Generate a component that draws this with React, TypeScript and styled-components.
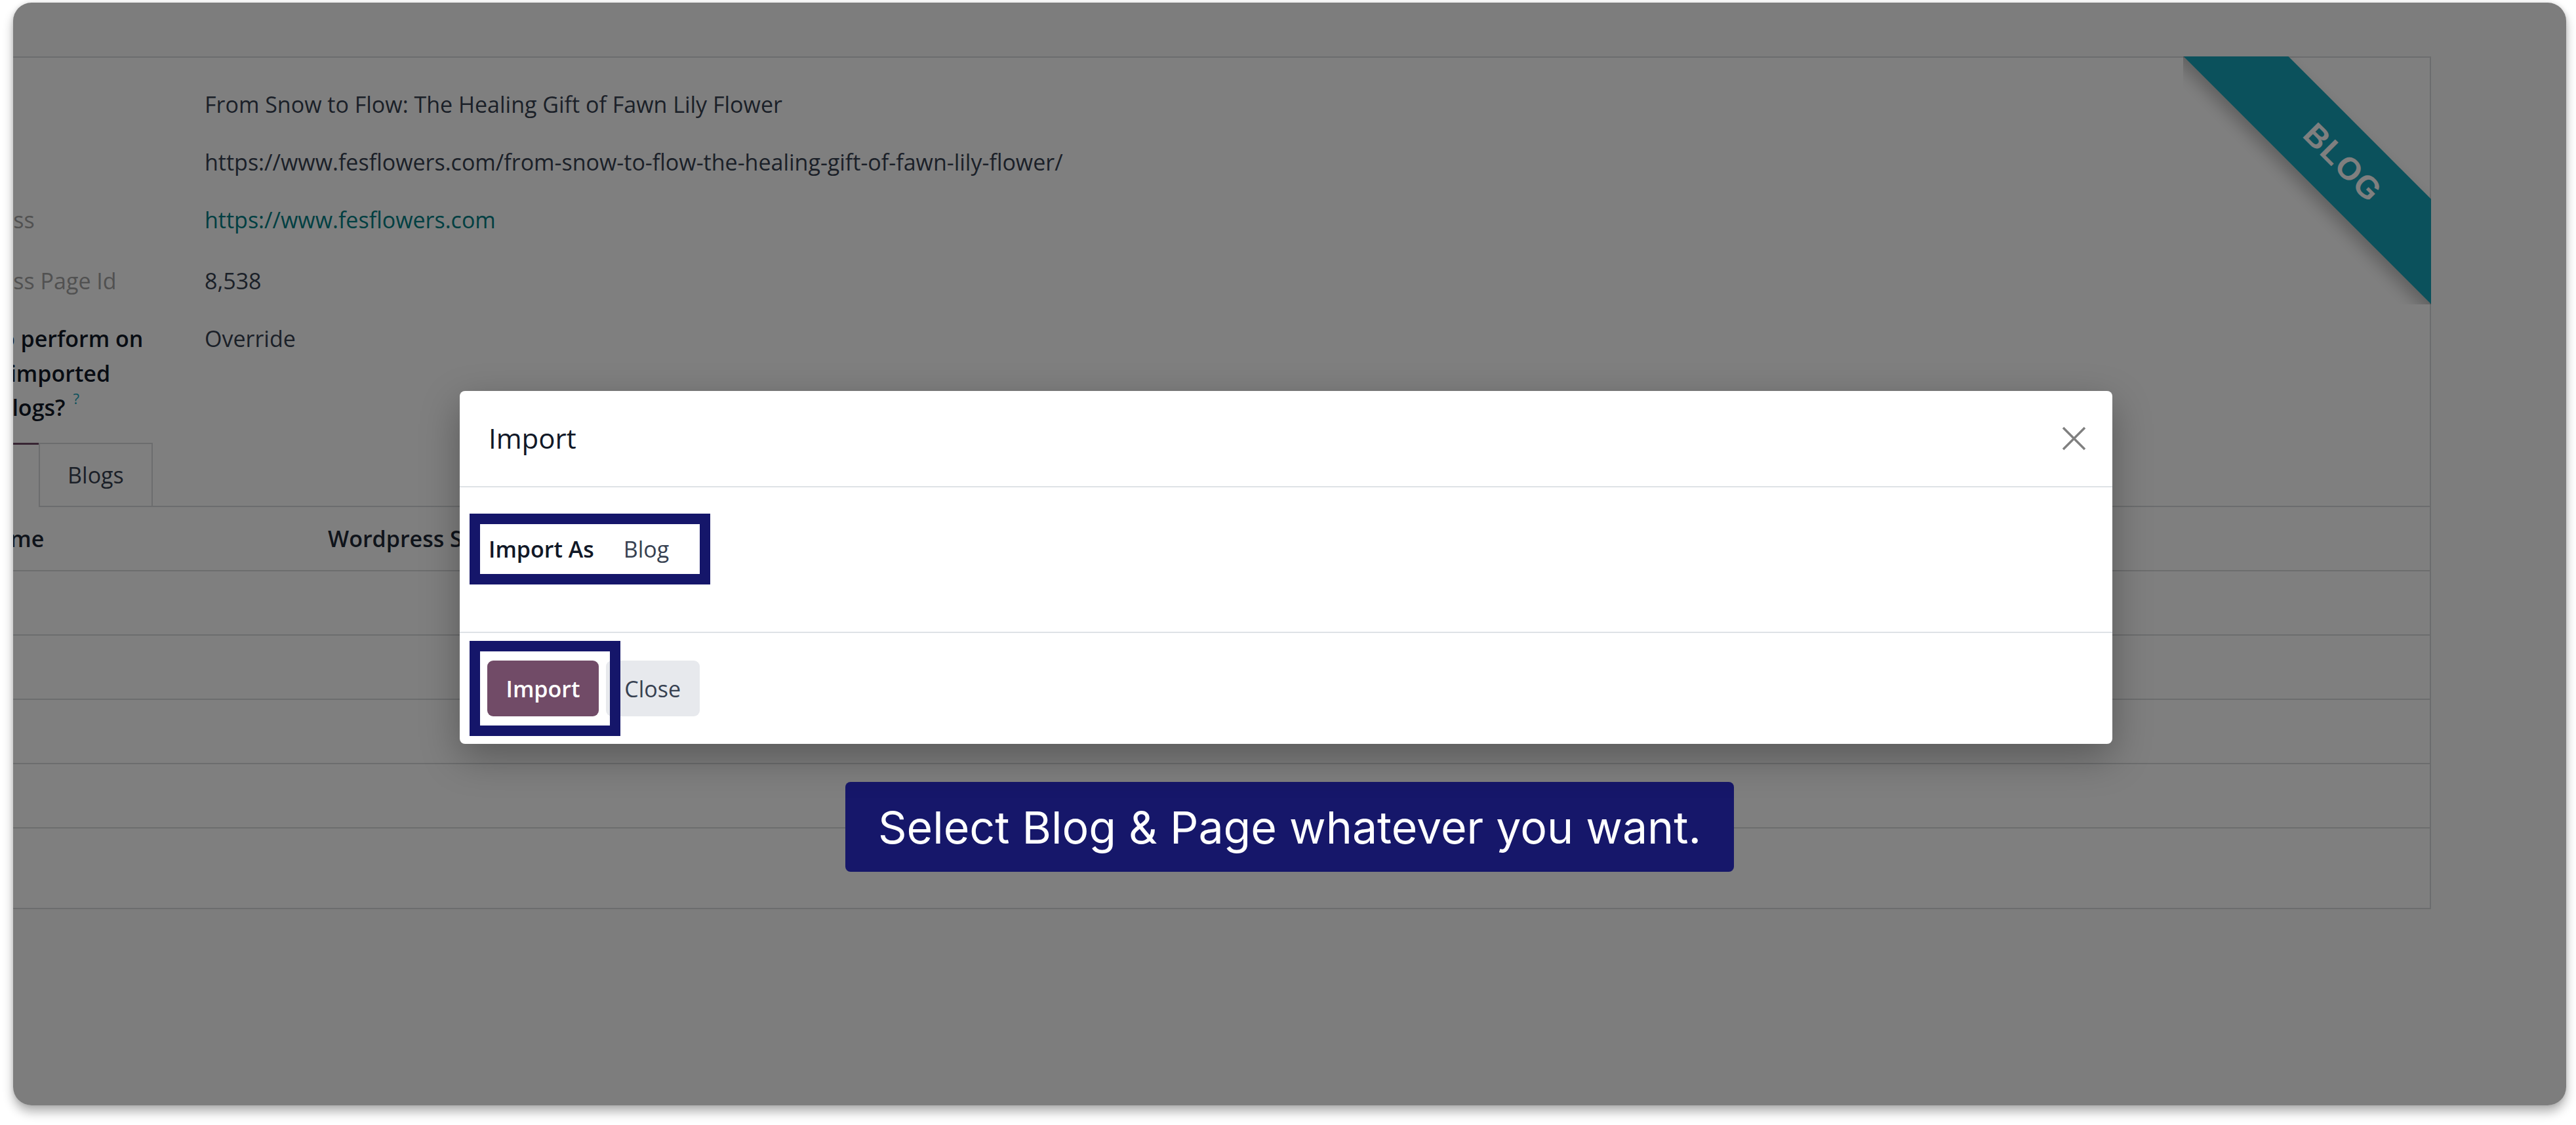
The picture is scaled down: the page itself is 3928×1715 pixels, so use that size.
import React from "react";
import styled, { createGlobalStyle } from "styled-components";

const GlobalStyle = createGlobalStyle`
  html, body { margin: 0; padding: 0; background: #ffffff; }
  body { font-family: "Open Sans", "Noto Sans", sans-serif; }
  * { box-sizing: border-box; }
`;

const Page = styled.div`
  width: 3928px;
  height: 1715px;
  padding: 4px 15px 0 20px;
  background: #ffffff;
  overflow: hidden;
`;

const Frame = styled.div`
  position: relative;
  width: 3893px;
  height: 1681px;
  border-radius: 28px;
  overflow: hidden;
  background: #fbfbfb;
  box-shadow: 0 10px 16px rgba(0, 0, 0, 0.3), 0 0 6px rgba(0, 0, 0, 0.12);
`;

const Screen = styled.div`
  padding: 82px 206px 0 0;
  font-family: "Open Sans", "Noto Sans", sans-serif;
  font-size: 34px;
  line-height: 52.5px;
  color: #374151;
`;

const Sheet = styled.div`
  position: relative;
  margin-left: -300px;
  background: #ffffff;
  border: 2px solid #d8dadd;
  padding: 45px 0 121px 158px;
`;

const RibbonClip = styled.div`
  position: absolute;
  top: -2px;
  right: -2px;
  width: 378px;
  height: 378px;
  overflow: hidden;
`;

const RibbonBand = styled.div`
  position: absolute;
  left: -77px;
  top: 106px;
  width: 640px;
  height: 113px;
  transform: rotate(45deg);
  background: #17a2b8;
  color: #ffffff;
  display: flex;
  align-items: center;
  justify-content: center;
  font-family: "Liberation Sans", Arial, sans-serif;
  font-weight: 700;
  font-size: 48px;
  letter-spacing: 2px;
  text-transform: uppercase;
  box-shadow: 0 12px 24px rgba(0, 0, 0, 0.25);
`;

const FieldGroup = styled.div`
  display: flex;
  flex-direction: column;
  gap: 35.5px;
`;

const FieldRow = styled.div<{ $h?: number }>`
  display: grid;
  grid-template-columns: 432px 1fr;
  min-height: ${(p) => p.$h ?? 52.5}px;
`;

const Label = styled.div<{ $strong?: boolean }>`
  white-space: nowrap;
  color: ${(p) => (p.$strong ? "#111827" : "#a3a3a3")};
  font-weight: ${(p) => (p.$strong ? 600 : 400)};
`;

const LabelLine = styled.span<{ $shift?: number }>`
  display: block;
  margin-left: ${(p) => p.$shift ?? 0}px;
`;

const Help = styled.sup`
  color: #17a2b8;
  font-size: 22px;
  font-weight: 400;
  margin-left: 12px;
  vertical-align: 18px;
  line-height: 0;
`;

const Value = styled.div<{ $link?: boolean }>`
  white-space: nowrap;
  color: ${(p) => (p.$link ? "#017e84" : "#374151")};
`;

const TabBar = styled.div`
  display: flex;
  margin-top: 27.5px;
  height: 98px;
`;

const Tab = styled.div<{ $active?: boolean }>`
  display: flex;
  align-items: center;
  padding: 0 42px;
  height: 98px;
  border: 2px solid #d8dadd;
  border-bottom-color: ${(p) => (p.$active ? "transparent" : "#d8dadd")};
  border-top: ${(p) => (p.$active ? "3px solid #714b67" : "2px solid #d8dadd")};
  border-left-color: ${(p) => (p.$active ? "transparent" : "#d8dadd")};
  border-right-width: ${(p) => (p.$active ? "0" : "2px")};
  color: ${(p) => (p.$active ? "#1f2937" : "#374151")};
`;

const TabFill = styled.div`
  flex: 1;
  border-bottom: 2px solid #d8dadd;
`;

const ListRow = styled.div<{ $head?: boolean }>`
  display: grid;
  grid-template-columns: 80px 531px 760px 1fr;
  height: 98px;
  border-bottom: 2px solid #d8dadd;
  align-items: center;
  font-weight: ${(p) => (p.$head ? 600 : 400)};
  color: #1f2937;
`;

const Cell = styled.div`
  padding: 0 9px;
  white-space: nowrap;
  overflow: hidden;
`;

const Backdrop = styled.div`
  position: absolute;
  inset: 0;
  background: rgba(0, 0, 0, 0.5);
`;

const Overlay = styled.div`
  position: absolute;
  inset: 0;
  display: flex;
  flex-direction: column;
  padding-top: 592px;
`;

const Modal = styled.div`
  position: relative;
  width: 2520px;
  margin-left: 681px;
  background: #ffffff;
  border-radius: 8px;
  box-shadow: 0 20px 60px rgba(0, 0, 0, 0.3);
  font-family: "Open Sans", "Noto Sans", sans-serif;
  font-size: 34px;
  line-height: 52.5px;
  color: #374151;
`;

const ModalHeader = styled.div`
  height: 147px;
  display: flex;
  align-items: center;
  justify-content: space-between;
  padding: 0 40px 0 44px;
  border-bottom: 2px solid #dee2e6;
`;

const ModalTitle = styled.div`
  font-size: 42px;
  color: #111827;
`;

const CloseX = styled.button`
  width: 37px;
  height: 37px;
  padding: 0;
  border: 0;
  background: transparent;
  display: flex;
`;

const ModalBody = styled.div`
  height: 220px;
  padding: 68px 44px 0;
`;

const InlineField = styled.div`
  display: flex;
  gap: 45px;
  align-items: baseline;
`;

const InlineLabel = styled.span`
  font-weight: 600;
  color: #111827;
`;

const InlineValue = styled.span`
  color: #374151;
`;

const ModalFooter = styled.div`
  height: 171px;
  display: flex;
  align-items: center;
  gap: 11px;
  padding: 0 42px;
  border-top: 2px solid #dee2e6;
`;

const Button = styled.button<{ $primary?: boolean }>`
  height: 85px;
  padding: 0 28.5px;
  border: 0;
  border-radius: 9px;
  font-family: "Open Sans", "Noto Sans", sans-serif;
  font-size: 34px;
  font-weight: ${(p) => (p.$primary ? 600 : 400)};
  background: ${(p) => (p.$primary ? "#714b67" : "#e7e9ed")};
  color: ${(p) => (p.$primary ? "#ffffff" : "#374151")};
`;

const Highlight = styled.div<{ $x: number; $y: number; $w: number; $h: number }>`
  position: absolute;
  left: ${(p) => p.$x}px;
  top: ${(p) => p.$y}px;
  width: ${(p) => p.$w}px;
  height: ${(p) => p.$h}px;
  border: 16px solid #15166a;
  pointer-events: none;
`;

const Hint = styled.div`
  align-self: center;
  margin-top: 58px;
  height: 137px;
  padding: 0 50px;
  display: flex;
  align-items: center;
  background: #16176a;
  border-radius: 8px;
  color: #ffffff;
  font-family: Inter, "Liberation Sans", sans-serif;
  font-size: 68px;
  white-space: nowrap;
`;

export default function App() {
  return (
    <Page>
      <GlobalStyle />
      <Frame>
        <Screen>
          <Sheet>
            <RibbonClip>
              <RibbonBand>Blog</RibbonBand>
            </RibbonClip>
            <FieldGroup>
              <FieldRow>
                <Label>Title</Label>
                <Value>From Snow to Flow: The Healing Gift of Fawn Lily Flower</Value>
              </FieldRow>
              <FieldRow>
                <Label>Url</Label>
                <Value>https://www.fesflowers.com/from-snow-to-flow-the-healing-gift-of-fawn-lily-flower/</Value>
              </FieldRow>
              <FieldRow $h={57.5}>
                <Label>Wordpress</Label>
                <Value $link>https://www.fesflowers.com</Value>
              </FieldRow>
              <FieldRow>
                <Label>Wordpress Page Id</Label>
                <Value>8,538</Value>
              </FieldRow>
              <FieldRow>
                <Label $strong>
                  <LabelLine $shift={-5}>Action to perform on</LabelLine>
                  <LabelLine $shift={4}>already imported</LabelLine>
                  <LabelLine $shift={5}>
                    all the Blogs?
                    <Help>?</Help>
                  </LabelLine>
                </Label>
                <Value>Override</Value>
              </FieldRow>
            </FieldGroup>
            <TabBar>
              <Tab $active>Pages</Tab>
              <Tab>Blogs</Tab>
              <TabFill />
            </TabBar>
            <ListRow $head>
              <Cell />
              <Cell>Name</Cell>
              <Cell>Wordpress Slug</Cell>
              <Cell>Status</Cell>
            </ListRow>
            <ListRow />
            <ListRow />
            <ListRow />
            <ListRow />
          </Sheet>
        </Screen>
        <Backdrop />
        <Overlay>
          <Modal>
            <ModalHeader>
              <ModalTitle>Import</ModalTitle>
              <CloseX aria-label="Close">
                <svg width="37" height="37" viewBox="0 0 37 37">
                  <path d="M2 2 L35 35 M35 2 L2 35" stroke="#808080" strokeWidth="3.5" />
                </svg>
              </CloseX>
            </ModalHeader>
            <ModalBody>
              <InlineField>
                <InlineLabel>Import As</InlineLabel>
                <InlineValue>Blog</InlineValue>
              </InlineField>
            </ModalBody>
            <ModalFooter>
              <Button $primary>Import</Button>
              <Button>Close</Button>
            </ModalFooter>
            <Highlight $x={15} $y={187} $w={367} $h={108} />
            <Highlight $x={15} $y={381} $w={230} $h={145} />
          </Modal>
          <Hint>Select Blog &amp; Page whatever you want.</Hint>
        </Overlay>
      </Frame>
    </Page>
  );
}
